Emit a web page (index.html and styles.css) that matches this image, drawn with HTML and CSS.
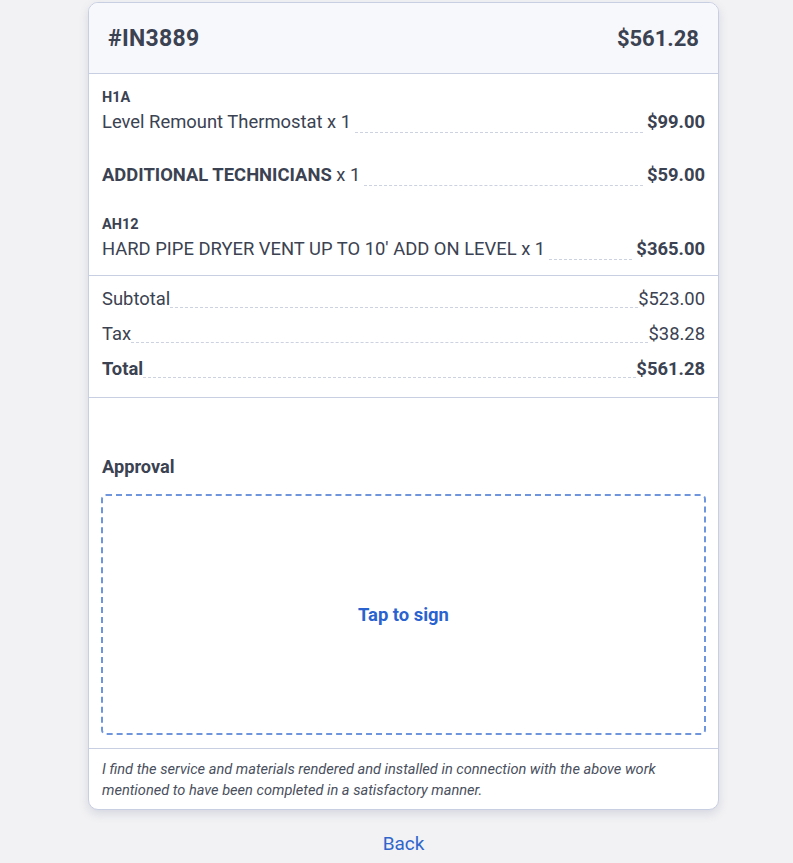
FILE: index.html
```html
<!DOCTYPE html>
<html>
<head>
<meta charset="utf-8">
<link rel="stylesheet" href="styles.css">
</head>
<body>
<div class="page">
  <div class="card">
    <div class="card-header">
      <span class="inv-id">#IN3889</span>
      <span class="inv-total">$561.28</span>
    </div>
    <div class="items">
      <div class="item">
        <div class="code">H1A</div>
        <div class="line">
          <span class="name">Level Remount Thermostat x 1</span>
          <span class="leader gap"></span>
          <span class="price">$99.00</span>
        </div>
      </div>
      <div class="item plain">
        <div class="line">
          <span class="name"><b>ADDITIONAL TECHNICIANS</b> x 1</span>
          <span class="leader gap"></span>
          <span class="price">$59.00</span>
        </div>
      </div>
      <div class="item">
        <div class="code">AH12</div>
        <div class="line">
          <span class="name">HARD PIPE DRYER VENT UP TO 10' ADD ON LEVEL x 1</span>
          <span class="leader gap"></span>
          <span class="price">$365.00</span>
        </div>
      </div>
    </div>
    <div class="totals">
      <div class="line">
        <span class="name">Subtotal</span>
        <span class="leader"></span>
        <span class="amount">$523.00</span>
      </div>
      <div class="line">
        <span class="name">Tax</span>
        <span class="leader"></span>
        <span class="amount">$38.28</span>
      </div>
      <div class="line strong">
        <span class="name">Total</span>
        <span class="leader"></span>
        <span class="amount">$561.28</span>
      </div>
    </div>
    <div class="approval">
      <div class="approval-label">Approval</div>
      <div class="sign-box"><span class="sign-text">Tap to sign</span></div>
    </div>
    <div class="disclaimer">I find the service and materials rendered and installed in connection with the above work mentioned to have been completed in a satisfactory manner.</div>
  </div>
  <div class="back-wrap"><a class="back" href="#">Back</a></div>
</div>
</body>
</html>
```

FILE: styles.css
```css
html, body {
  margin: 0;
  padding: 0;
  background: #f2f2f4;
  font-family: Roboto, "Liberation Sans", Arial, sans-serif;
  color: #3b4251;
}

.page {
  padding-top: 2px;
  padding-left: 88px;
  width: 631px;
}

.card {
  background: #ffffff;
  border: 1px solid #c9cfe3;
  border-radius: 10px;
  box-shadow: 0 4px 10px rgba(90, 100, 140, 0.18);
  overflow: hidden;
}

.card-header {
  display: flex;
  justify-content: space-between;
  align-items: center;
  height: 70px;
  padding: 0 19px;
  background: #f7f8fc;
  border-bottom: 1px solid #c9cfe3;
  font-weight: 700;
  color: #3b4251;
}

.inv-id {
  font-size: 23px;
  letter-spacing: 0.3px;
}

.inv-total {
  font-size: 22px;
}

.items {
  display: flex;
  flex-direction: column;
  gap: 28px;
  padding: 14px 13px 14px 13px;
  border-bottom: 1px solid #c9cfe3;
}

.item.plain {
  padding-top: 1px;
}

.code {
  font-size: 14.5px;
  font-weight: 700;
  line-height: 18px;
  height: 22px;
  padding-top: 1px;
  box-sizing: border-box;
}

.line {
  display: flex;
  align-items: flex-end;
  font-size: 18.4px;
  line-height: 24px;
}

.name {
  white-space: nowrap;
}

.name b {
  font-weight: 700;
}

.leader {
  flex: 1;
  border-bottom: 1px dashed #cdd2e0;
  margin-bottom: 1px;
  align-self: flex-end;
  height: 0;
}

.leader.gap {
  margin-left: 4px;
  margin-right: 4px;
}

.price {
  font-weight: 700;
  white-space: nowrap;
}

.totals {
  display: flex;
  flex-direction: column;
  gap: 11px;
  padding: 11px 13px 16px 13px;
  border-bottom: 1px solid #c9cfe3;
}

.totals .line .leader {
  margin-bottom: 3px;
}

.line.strong {
  font-weight: 700;
}

.amount {
  white-space: nowrap;
}

.approval {
  padding: 56px 12px 13px 12px;
  border-bottom: 1px solid #c9cfe3;
}

.approval-label {
  font-size: 18.2px;
  font-weight: 700;
  line-height: 26px;
  padding-left: 1px;
  margin-bottom: 14px;
}

.sign-box {
  height: 237px;
  border: 2px dashed #6f96dc;
  border-radius: 5px;
  display: flex;
  align-items: center;
  justify-content: center;
}

.sign-text {
  color: #2a63cf;
  font-weight: 700;
  font-size: 18.4px;
}

.disclaimer {
  padding: 10px 13px 8px 13px;
  font-size: 14.6px;
  line-height: 21px;
  font-style: italic;
  color: #4a505e;
}

.back-wrap {
  text-align: center;
  padding-top: 22px;
}

.back {
  color: #2f66cc;
  font-size: 19px;
  text-decoration: none;
  line-height: 24px;
}
```
